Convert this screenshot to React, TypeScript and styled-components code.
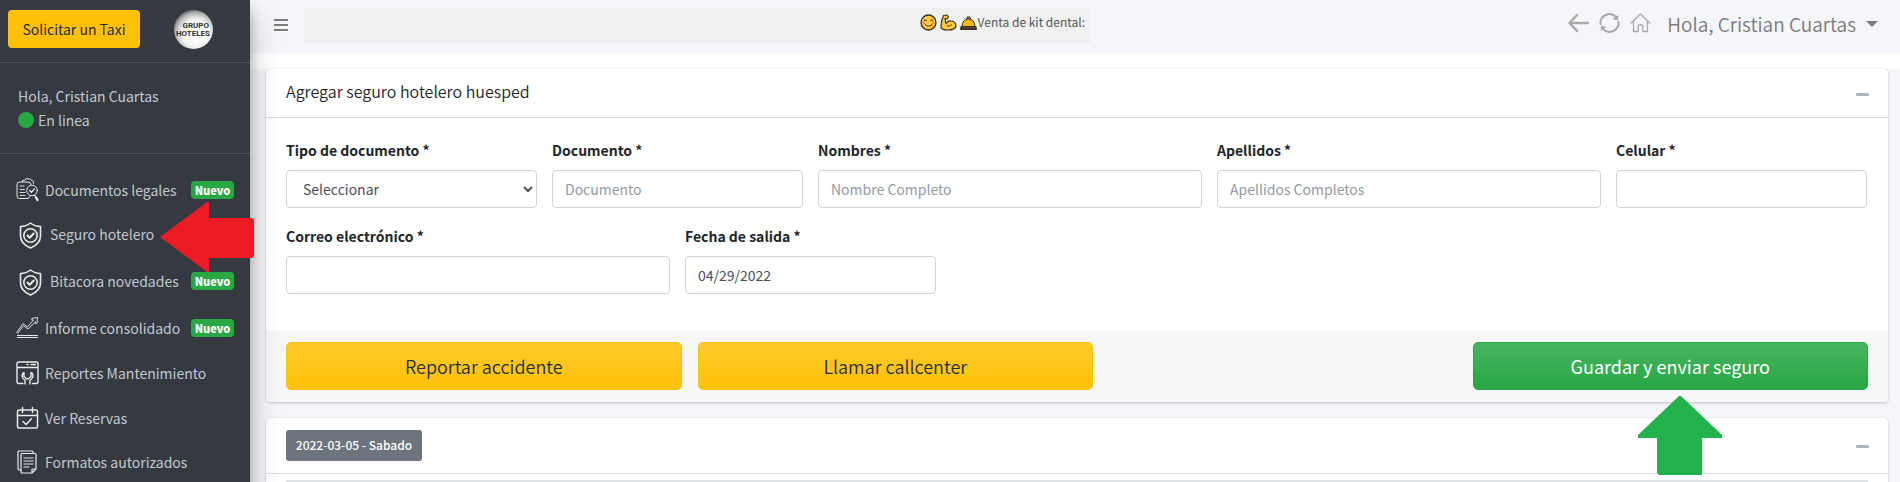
import React from "react";
import styled, { createGlobalStyle, css } from "styled-components";

const GlobalStyle = createGlobalStyle`
  *, *::before, *::after { box-sizing: border-box; }
  body {
    margin: 0;
    background: #fff;
    color: #212529;
    font-family: "Noto Sans CJK SC", "Noto Sans", sans-serif;
    font-size: 14px;
    line-height: 24px;
  }
  button, input, select { font-family: inherit; margin: 0; }
`;

const Shell = styled.div`
  display: grid;
  grid-template-columns: 250px minmax(0, 1fr);
  height: 100vh;
  overflow: hidden;
`;

const Sidebar = styled.aside`
  position: relative;
  z-index: 2;
  background: #353a40;
  color: #c2c7d0;
  box-shadow: 0 14px 28px rgba(0, 0, 0, 0.25), 0 10px 10px rgba(0, 0, 0, 0.22);
`;

const Brand = styled.div`
  display: flex;
  align-items: center;
  gap: 34px;
  height: 63px;
  padding: 0 8px 4px;
  border-bottom: 1px solid #4b545c;
`;

const TaxiButton = styled.button`
  width: 132px;
  height: 38px;
  padding: 0;
  border: 0;
  border-radius: 4px;
  background: #ffc107;
  color: #1f2d3d;
  font-size: 14px;
`;

const UserPanel = styled.div`
  padding: 21px 18px;
  border-bottom: 1px solid #4b545c;
  height: 91px;
`;

const Status = styled.div`
  display: flex;
  align-items: center;
  gap: 4px;
`;

const StatusDot = styled.span`
  width: 16px;
  height: 16px;
  border-radius: 50%;
  background: #28a745;
`;

const Nav = styled.nav`
  padding: 14px 16px 0;
`;

const NewBadge = styled.span`
  margin-left: auto;
  width: 43px;
  height: 18px;
  border-radius: 4px;
  background: #28a745;
  color: #fff;
  font-size: 11px;
  font-weight: 900;
  line-height: 18px;
  text-align: center;
`;

const NavItem = styled.a<{ $wide?: boolean }>`
  position: relative;
  display: flex;
  align-items: ${(p) => (p.$wide ? "flex-start" : "center")};
  gap: ${(p) => (p.$wide ? 8 : 6)}px;
  padding: 10px 0 10px ${(p) => (p.$wide ? 3 : 0)}px;
  color: #c2c7d0;
  text-decoration: none;
  white-space: nowrap;
  svg { flex: none; display: block; }
  ${NewBadge} { margin-top: ${(p) => (p.$wide ? 3 : 0)}px; }
`;

const RedPointer = styled.svg`
  position: absolute;
  left: 144px;
  top: -10px;
  pointer-events: none;
`;

const Main = styled.main`
  min-width: 0;
  background: #f4f6f9;
`;

const Topbar = styled.header`
  display: flex;
  align-items: center;
  height: 53px;
  padding: 0 22px 4px 24px;
  color: #7b7b7b;
`;

const IconButton = styled.button`
  display: flex;
  padding: 0;
  border: 0;
  background: none;
  color: inherit;
`;

const Ticker = styled.div`
  display: flex;
  align-items: center;
  justify-content: flex-end;
  flex: 0 1 786px;
  gap: 1px;
  height: 35px;
  margin: 2px auto 0 16px;
  padding: 0 5px 7px 0;
  background: #f0f0f0;
  color: #555;
  font-size: 12px;
  line-height: 20px;
  white-space: nowrap;
`;

const Emojis = styled.span`
  display: flex;
  gap: 3px;
`;

const Tools = styled.div`
  display: flex;
  gap: 10px;
  margin-bottom: 4px;
  color: #aaa;
`;

const UserMenu = styled.button`
  display: flex;
  align-items: center;
  gap: 10px;
  margin: 0 0 2px 16px;
  padding: 0;
  border: 0;
  background: none;
  color: #7b7b7b;
  font-size: 19px;
  font-weight: 350;
  line-height: 28px;
  white-space: nowrap;
`;

const Caret = styled.span`
  border: 6px solid transparent;
  border-top-color: #7b7b7b;
  border-bottom: 0;
`;

const Strip = styled.div`
  height: 16px;
  background: #fff;
`;

const Content = styled.div`
  display: flex;
  flex-direction: column;
  gap: 16px;
  padding: 0 12px 0 16px;
`;

const Card = styled.section`
  border-radius: 4px;
  background: #fff;
  box-shadow: 0 0 1px rgba(0, 0, 0, 0.125), 0 1px 3px rgba(0, 0, 0, 0.2);
`;

const CardHeader = styled.div`
  display: flex;
  align-items: center;
  justify-content: space-between;
  padding: 12px 19px 12px 20px;
  border-bottom: 1px solid #dcdddf;
`;

const CardTitle = styled.h1`
  margin: 0 0 4px;
  font-size: 16px;
  font-weight: 350;
  line-height: 20px;
`;

const Collapse = styled.button`
  display: flex;
  align-items: center;
  width: 13px;
  height: 24px;
  padding: 2px 0 0;
  border: 0;
  background: none;
  &::before {
    content: "";
    width: 13px;
    height: 3px;
    border-radius: 1px;
    background: #adb5bd;
  }
`;

const FormGrid = styled.div`
  display: grid;
  grid-template-columns: repeat(12, minmax(0, 1fr));
  gap: 16px 15px;
  padding: 20px 21px 36px 20px;
`;

const Field = styled.div<{ $span: number }>`
  grid-column: span ${(p) => p.$span};
  display: flex;
  flex-direction: column;
  gap: 8px;
`;

const Label = styled.label`
  font-weight: 700;
  line-height: 24px;
`;

const control = css`
  width: 100%;
  height: 38px;
  border: 1px solid #ced4da;
  border-radius: 4px;
  background-color: #fff;
  color: #495057;
  font-size: 14px;
`;

const TextInput = styled.input`
  ${control}
  padding: 0 12px;
  &::placeholder { color: #939ba2; opacity: 1; }
`;

const Select = styled.select`
  ${control}
  padding: 0 0 0 12px;
`;

const CardFooter = styled.div`
  display: flex;
  gap: 16px;
  padding: 12px 20px;
  border-radius: 0 0 4px 4px;
  background: #f7f7f7;
`;

const Save = styled.div`
  position: relative;
  flex: 0 0 25%;
  margin-left: auto;
`;

const Action = styled.button<{ $tone: "warning" | "success" }>`
  flex: none;
  width: ${(p) => (p.$tone === "warning" ? "25%" : "100%")};
  height: 48px;
  padding: 0 0 1px;
  border: 1px solid ${(p) => (p.$tone === "warning" ? "#ffc107" : "#28a745")};
  border-radius: 5px;
  background: ${(p) =>
    p.$tone === "warning"
      ? "linear-gradient(#ffca2c, #ffc107)"
      : "linear-gradient(#48b461, #28a745)"};
  color: ${(p) => (p.$tone === "warning" ? "#1f2d3d" : "#fff")};
  font-size: 18px;
  font-weight: ${(p) => (p.$tone === "warning" ? 350 : 400)};
`;

const GreenPointer = styled.svg`
  position: absolute;
  z-index: 1;
  left: calc(50% - 32px);
  top: 54px;
  pointer-events: none;
`;

const DateBadge = styled.span`
  width: 136px;
  height: 31px;
  border-radius: 3px;
  background: #6c757d;
  color: #fff;
  font-size: 12px;
  font-weight: 500;
  line-height: 30px;
  text-align: center;
`;

const CardBody = styled.div`
  padding: 6px 20px 20px;
`;

const Divider = styled.hr`
  height: 2px;
  margin: 0;
  border: 0;
  background: #dee2e6;
`;

const line = {
  fill: "none",
  stroke: "#e8eaed",
  strokeWidth: 1.3,
  strokeLinecap: "round" as const,
  strokeLinejoin: "round" as const,
};

const Logo = () => (
  <svg width="39" height="39" viewBox="0 0 39 39" role="img" aria-label="Grupo Hoteles">
    <defs>
      <radialGradient id="metal" cx="0.56" cy="0.6" r="0.6">
        <stop offset="0" stopColor="#fff" />
        <stop offset="0.6" stopColor="#f4f4f4" />
        <stop offset="0.85" stopColor="#bbb" />
        <stop offset="1" stopColor="#777" />
      </radialGradient>
    </defs>
    <circle cx="19.5" cy="19.5" r="19.5" fill="url(#metal)" />
    <g fill="#333" fontFamily="Roboto, sans-serif" fontWeight="700">
      <text x="35" y="18" textAnchor="end" fontSize="8">GRUPO</text>
      <text x="36" y="26" textAnchor="end" fontSize="8">HOTELES</text>
    </g>
  </svg>
);

const LegalIcon = () => (
  <svg width="23" height="24" viewBox="0 0 23 24" {...line} strokeWidth="1">
    <path d="M6.500 3.500V2.500l2-.2c.5-1.500 2-1.500 3.500-1.500 2 0 3 .3 3.300 1.500h1q1.300.3 1.300 3" />
    <path d="M11 20.500H3.500Q1 20.500 1 18V6.500Q1 4 3.500 4H12q2.500 0 3 2.500M14 18.500q-.5 2-3 2" />
    <path d="M4 8h4M4 11.500h4.500M4 14.500h5M4 17.500h5" strokeWidth="0.900" />
    <circle cx="16" cy="12.500" r="5.300" />
    <path d="m13.700 12.500 1.700 1.700 3-3.200M18.700 17.500l1 1.500" strokeWidth="1.300" />
    <path d="m20 19.500 1.500 2.500" strokeWidth="2.400" />
  </svg>
);

const ShieldIcon = () => (
  <svg width="23" height="27" viewBox="0 0 23 27" {...line} strokeWidth="1.600">
    <path d="M11.500 1C9 3 5 4.500 1.500 4.500V14c0 5.500 4 9.500 10 12 6-2.500 10-6.500 10-12V4.500C18 4.500 14 3 11.500 1Z" />
    <circle cx="11.500" cy="13.500" r="6.700" />
    <path d="m8.500 13.500 2.200 2.200 4-4.200" strokeWidth="2" />
  </svg>
);

const ChartIcon = () => (
  <svg width="23" height="24" viewBox="0 0 23 24" {...line} strokeWidth="0.900">
    <path d="m1 16 6-8.500 4.500 3.500 6-7-1.800-.2.300-1.500 5.500-.8-.4 5.800-1.600.1V5.800L12 13 7.500 9.700 2 17Z" />
    <path d="M1.500 19.500h20M1.500 21.500h20" strokeWidth="1.200" />
  </svg>
);

const MaintenanceIcon = () => (
  <svg width="23" height="26" viewBox="0 0 23 26" {...line} strokeWidth="1.400">
    <path d="M7 23.500H3q-2 0-2-2V3.500q0-1.500 2-1.500h17q2 0 2 1.500v18q0 2-2 2h-3.500M1 7.500h21" />
    <path d="M11 4.500h1M15 4.500h4.500" />
    <path d="M9 24v-4q-3.500-2-2.700-5.500.4-1.500 1.700-2v4l2.500 2.200h2l2.500-2.200v-4q1.500.5 1.800 2 .7 3.500-2.800 5.500v4" />
  </svg>
);

const CalendarIcon = () => (
  <svg width="23" height="24" viewBox="0 0 23 24" {...line} strokeWidth="1.500">
    <rect x="1.500" y="4" width="20" height="18" rx="1.500" />
    <path d="M1.500 9.500h20M6.500 1.500v5M16.500 1.500v5" />
    <path d="m7 15.500 3 3 5.500-5.800" />
  </svg>
);

const FormsIcon = () => (
  <svg width="23" height="24" viewBox="0 0 23 24" {...line} strokeWidth="1.200">
    <path d="M5 20H3q-1 0-1-1V2q0-1 1-1h13q1 0 1 1v1" />
    <path d="M6 3.500h13q1 0 1 1V19l-4 4H6q-1 0-1-1V4.500q0-1 1-1ZM20 19h-4v4" />
    <path d="M8 8h9M8 11h9M8 14h9M8 17h5" />
  </svg>
);

const BackIcon = () => (
  <svg width="21" height="20" viewBox="0 0 21 20" fill="none" stroke="currentColor" strokeWidth="2.500" strokeLinecap="round" strokeLinejoin="round">
    <path d="M9 2 1.500 10 9 18M2 10h18" />
  </svg>
);

const RefreshIcon = () => (
  <svg width="21" height="20" viewBox="0 0 21 20" fill="none" stroke="currentColor" strokeWidth="2" strokeLinecap="round">
    <path d="M1.500 11a9 9 0 0 1 15.500-7M19.500 9a9 9 0 0 1-15.500 7" />
    <path d="m19.500 2-.5 5.500-5.500-1.500ZM1.500 18l.5-5.500 5.500 1.500Z" fill="currentColor" stroke="none" />
  </svg>
);

const HomeIcon = () => (
  <svg width="21" height="20" viewBox="0 0 21 20" fill="none" stroke="currentColor" strokeWidth="1.300" strokeLinejoin="round" strokeLinecap="round">
    <path d="m1 10 9.500-9 9.500 9M3.500 9v9.500h4.700V13q0-1 1-1h2.600q1 0 1 1v5.500h4.700V9" />
  </svg>
);

const Smile = () => (
  <svg width="17" height="17" viewBox="0 0 17 17" fill="none" stroke="#332" strokeLinecap="round">
    <circle cx="8.500" cy="8.500" r="7.500" fill="#ffc83d" strokeWidth="1.300" />
    <path d="M4 6.500q1.200-1.500 2.500 0M10.500 6.500q1.200-1.500 2.500 0M5 10.500q3.500 3.500 7 0" />
    <circle cx="3.800" cy="9" r="1.200" fill="#f98346" stroke="none" />
    <circle cx="13.200" cy="9" r="1.200" fill="#f98346" stroke="none" />
  </svg>
);

const Biceps = () => (
  <svg width="17" height="17" viewBox="0 0 17 17" fill="#ffc83d" stroke="#332" strokeWidth="1.200" strokeLinejoin="round">
    <path d="M3.500 1.500 7 1l1.500 2-1.500 2-2-.5L6 9.500q2-3 5-2.500 5 .5 5 5-1 4-8 4Q2 16 1 13.500q0-7 2.500-12Z" />
    <path d="M7 12q3 .5 5-1.500" fill="none" strokeWidth="0.800" />
  </svg>
);

const Bell = () => (
  <svg width="17" height="17" viewBox="0 0 17 17" stroke="#332" strokeWidth="1">
    <path d="M7 3h3v2H7Z" fill="#ffb02e" />
    <path d="M2 12.500Q2.500 5 8.500 5t6.500 7.500Z" fill="#ffb900" />
    <path d="M1 12.500h15l.5 3H.5Z" fill="#5b3a2c" />
  </svg>
);

type Item = {
  text: string;
  icon: React.ReactNode;
  wide?: boolean;
  isNew?: boolean;
  pointed?: boolean;
};

const items: Item[] = [
  { text: "Documentos legales", icon: <LegalIcon />, isNew: true },
  { text: "Seguro hotelero", icon: <ShieldIcon />, wide: true, pointed: true },
  { text: "Bitacora novedades", icon: <ShieldIcon />, wide: true, isNew: true },
  { text: "Informe consolidado", icon: <ChartIcon />, isNew: true },
  { text: "Reportes Mantenimiento", icon: <MaintenanceIcon /> },
  { text: "Ver Reservas", icon: <CalendarIcon /> },
  { text: "Formatos autorizados", icon: <FormsIcon /> },
];

type FieldProps = {
  id: string;
  label: string;
  span: number;
  placeholder?: string;
  value?: string;
};

const TextField = ({ id, label, span, placeholder, value }: FieldProps) => (
  <Field $span={span}>
    <Label htmlFor={id}>{label}</Label>
    <TextInput id={id} placeholder={placeholder} defaultValue={value} />
  </Field>
);

export default function App() {
  return (
    <>
      <GlobalStyle />
      <Shell>
        <Sidebar>
          <Brand>
            <TaxiButton>Solicitar un Taxi</TaxiButton>
            <Logo />
          </Brand>
          <UserPanel>
            <div>Hola, Cristian Cuartas</div>
            <Status>
              <StatusDot />
              En linea
            </Status>
          </UserPanel>
          <Nav>
            {items.map((item) => (
              <NavItem href="#" key={item.text} $wide={item.wide}>
                {item.icon}
                {item.text}
                {item.isNew && <NewBadge>Nuevo</NewBadge>}
                {item.pointed && (
                  <RedPointer width="94" height="70" viewBox="0 0 94 70">
                    <path d="M0 35 47 0h2v16h43l2 2v36l-2 2H49v14h-2Z" fill="#ed1c24" />
                  </RedPointer>
                )}
              </NavItem>
            ))}
          </Nav>
        </Sidebar>
        <Main>
          <Topbar>
            <IconButton aria-label="Menú">
              <svg width="14" height="14" viewBox="0 0 14 14" stroke="currentColor" strokeWidth="2">
                <path d="M0 2h14M0 7h14M0 12h14" />
              </svg>
            </IconButton>
            <Ticker>
              <Emojis>
                <Smile />
                <Biceps />
                <Bell />
              </Emojis>
              Venta de kit dental:
            </Ticker>
            <Tools>
              <IconButton aria-label="Volver"><BackIcon /></IconButton>
              <IconButton aria-label="Recargar"><RefreshIcon /></IconButton>
              <IconButton aria-label="Inicio"><HomeIcon /></IconButton>
            </Tools>
            <UserMenu>
              Hola, Cristian Cuartas
              <Caret />
            </UserMenu>
          </Topbar>
          <Strip />
          <Content>
            <Card>
              <CardHeader>
                <CardTitle>Agregar seguro hotelero huesped</CardTitle>
                <Collapse aria-label="Contraer" />
              </CardHeader>
              <FormGrid>
                <Field $span={2}>
                  <Label htmlFor="tipo">Tipo de documento *</Label>
                  <Select id="tipo">
                    <option>Seleccionar</option>
                  </Select>
                </Field>
                <TextField id="documento" label="Documento *" span={2} placeholder="Documento" />
                <TextField id="nombres" label="Nombres *" span={3} placeholder="Nombre Completo" />
                <TextField id="apellidos" label="Apellidos *" span={3} placeholder="Apellidos Completos" />
                <TextField id="celular" label="Celular *" span={2} />
                <TextField id="correo" label="Correo electrónico *" span={3} />
                <TextField id="salida" label="Fecha de salida *" span={2} value="04/29/2022" />
              </FormGrid>
              <CardFooter>
                <Action $tone="warning">Reportar accidente</Action>
                <Action $tone="warning">Llamar callcenter</Action>
                <Save>
                  <Action $tone="success">Guardar y enviar seguro</Action>
                  <GreenPointer width="84" height="79" viewBox="0 0 84 79">
                    <path d="M41 0h2l41 39v3H64v37H21l-2-2V42H0v-3Z" fill="#22b14c" />
                  </GreenPointer>
                </Save>
              </CardFooter>
            </Card>
            <Card>
              <CardHeader>
                <DateBadge>2022-03-05 - Sabado</DateBadge>
                <Collapse aria-label="Contraer" />
              </CardHeader>
              <CardBody>
                <Divider />
              </CardBody>
            </Card>
          </Content>
        </Main>
      </Shell>
    </>
  );
}
